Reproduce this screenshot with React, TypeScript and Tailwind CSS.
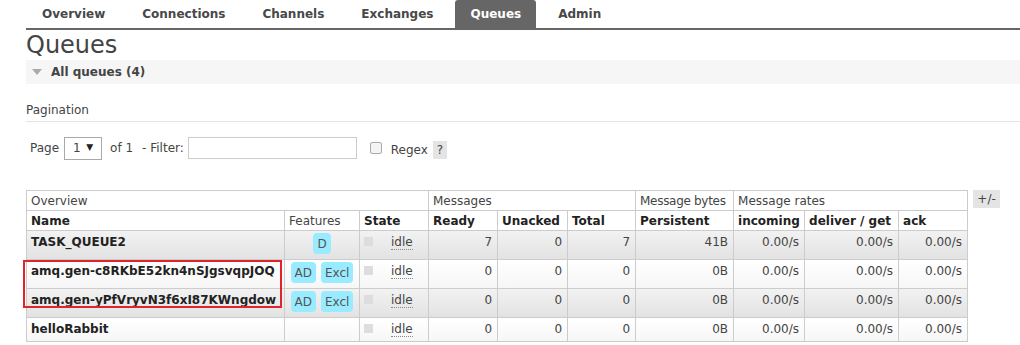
import React from 'react';

const tabs = ['Overview', 'Connections', 'Channels', 'Exchanges', 'Queues', 'Admin'];

type Row = {
  name: string;
  features: string[];
  ready: string;
  unacked: string;
  total: string;
  persistent: string;
};

const rows: Row[] = [
  { name: 'TASK_QUEUE2', features: ['D'], ready: '7', unacked: '0', total: '7', persistent: '41B' },
  { name: 'amq.gen-c8RKbE52kn4nSJgsvqpJOQ', features: ['AD', 'Excl'], ready: '0', unacked: '0', total: '0', persistent: '0B' },
  { name: 'amq.gen-yPfVryvN3f6xI87KWngdow', features: ['AD', 'Excl'], ready: '0', unacked: '0', total: '0', persistent: '0B' },
  { name: 'helloRabbit', features: [], ready: '0', unacked: '0', total: '0', persistent: '0B' },
];

const td = 'border border-[#ccc] px-[5px] align-top pt-[2px] whitespace-nowrap';
const num = td + ' text-right';
const th = 'border border-[#ccc] px-[4px] text-left whitespace-nowrap overflow-hidden';

export default function App() {
  return (
    <div className="w-[1020px] h-[345px] overflow-hidden bg-white text-[12px] text-[#444] font-['DejaVu_Sans',Verdana,sans-serif]">
      {/* top menu */}
      <div className="ml-[26px] h-[30px] border-b-2 border-[#666] flex items-end">
        <ul className="flex gap-[7px] pl-[1px]">
          {tabs.map(t => (
            <li
              key={t}
              className={
                'h-[28px] px-[15px] flex items-center font-bold rounded-t-[3px] ' +
                (t === 'Queues' ? 'bg-[#666] text-white' : 'text-[#484848]')
              }
            >
              {t}
            </li>
          ))}
        </ul>
      </div>

      <div className="ml-[26px]">
        <h1 className="text-[24px] leading-[29px] text-[#444] mt-[1px]">Queues</h1>

        <div className="h-[24px] bg-[#f6f6f6] flex items-center pl-[6px] gap-[9px]">
          <svg width="10" height="6" viewBox="0 0 10 6">
            <path d="M0 0 L10 0 L5 6 Z" fill="#aaa" />
          </svg>
          <span className="font-bold text-[#444]">All queues (4)</span>
        </div>

        <h3 className="mt-[19px] pb-[4px] border-b border-[#e4e4e4] text-[12px] leading-[14px]">Pagination</h3>

        <div className="mt-[14px] flex items-center pl-[4px] h-[24px]">
          <span>Page</span>
          <div className="ml-[5px] w-[38px] h-[23px] border border-[#aaa] flex items-center justify-between px-[8px] text-[12px]">
            <span>1</span>
            <span className="text-[9px] text-[#222]">▼</span>
          </div>
          <span className="ml-[8px]">of 1</span>
          <span className="ml-[9px]">- Filter:</span>
          <div className="ml-[4px] w-[169px] h-[22px] border border-[#ccc]" />
          <div className="ml-[13px] w-[12px] h-[12px] border border-[#aaa] rounded-[2px] bg-[#f4f4f4]" />
          <span className="ml-[9px] mt-[3px]">Regex</span>
          <span className="ml-[5px] mt-[3px] w-[14px] h-[18px] bg-[#e4e4e4] flex items-center justify-center">?</span>
        </div>

        <div className="mt-[30px] flex items-start">
          <div className="relative">
            <table className="border-collapse table-fixed w-[941px]">
              <colgroup>
                <col className="w-[258px]" />
                <col className="w-[75px]" />
                <col className="w-[69px]" />
                <col className="w-[69px]" />
                <col className="w-[70px]" />
                <col className="w-[68px]" />
                <col className="w-[98px]" />
                <col className="w-[71px]" />
                <col className="w-[94px]" />
                <col className="w-[69px]" />
              </colgroup>
              <thead>
                <tr className="h-[20px]">
                  <th colSpan={3} className={th + ' font-normal'}>Overview</th>
                  <th colSpan={3} className={th + ' font-normal'}>Messages</th>
                  <th className={th + ' font-normal tracking-[-0.3px]'}>Message bytes</th>
                  <th colSpan={3} className={th + ' font-normal'}>Message rates</th>
                </tr>
                <tr className="h-[20px] text-[#222]">
                  <th className={th}>Name</th>
                  <th className={th + ' font-normal text-[#444]'}>Features</th>
                  <th className={th}>State</th>
                  <th className={th}>Ready</th>
                  <th className={th}>Unacked</th>
                  <th className={th}>Total</th>
                  <th className={th}>Persistent</th>
                  <th className={th}>incoming</th>
                  <th className={th}>deliver / get</th>
                  <th className={th}>ack</th>
                </tr>
              </thead>
              <tbody>
                {rows.map((r, i) => (
                  <tr
                    key={r.name}
                    className={
                      (r.features.length ? 'h-[29px] ' : 'h-[24px] ') +
                      (i % 2 === 0
                        ? 'bg-gradient-to-b from-[#f2f2f2] to-[#e2e2e2]'
                        : 'bg-gradient-to-b from-white to-[#f6f6f6]')
                    }
                  >
                    <td className={td + ' font-bold text-[#222] pl-[4px] pr-0 overflow-hidden'}>{r.name}</td>
                    <td className="border border-[#ccc] px-[3px] pt-[2px] align-top">
                      <div className="flex justify-center gap-[5px]">
                        {r.features.map(f => (
                          <span key={f} className="h-[21px] px-[4px] min-w-[18px] rounded-[4px] bg-[#99ebff] text-[#555] flex items-center justify-center">
                            {f}
                          </span>
                        ))}
                      </div>
                    </td>
                    <td className={td}>
                      <div className="flex items-start">
                        <span className="mt-[4px] ml-[-1px] w-[9px] h-[9px] bg-[#ddd]" />
                        <span className="ml-[18px] mt-[2px] border-b border-dotted border-[#888] leading-[14px]">idle</span>
                      </div>
                    </td>
                    <td className={num}>{r.ready}</td>
                    <td className={num}>{r.unacked}</td>
                    <td className={num}>{r.total}</td>
                    <td className={num}>{r.persistent}</td>
                    <td className={num}>0.00/s</td>
                    <td className={num}>0.00/s</td>
                    <td className={num}>0.00/s</td>
                  </tr>
                ))}
              </tbody>
            </table>
            <div className="absolute left-[-3px] top-[70px] w-[259px] h-[48px] border-2 border-[#e0242b] pointer-events-none" />
          </div>
          <span className="ml-[5px] w-[27px] h-[18px] bg-[#e4e4e4] flex items-center justify-center">+/-</span>
        </div>
      </div>
    </div>
  );
}
